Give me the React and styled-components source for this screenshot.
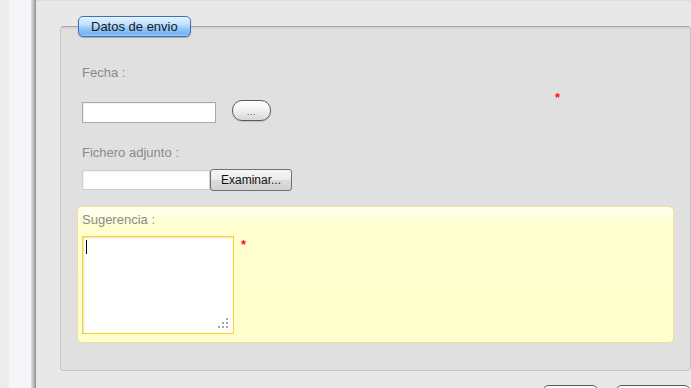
import React from 'react';
import styled, { createGlobalStyle } from 'styled-components';

const GlobalStyle = createGlobalStyle`
  html, body {
    margin: 0;
    padding: 0;
    height: 388px;
    overflow: hidden;
    font-family: "Liberation Sans", Arial, sans-serif;
  }
`;

const Page = styled.div`
  display: flex;
  height: 388px;
  overflow: hidden;
`;

const Gutter = styled.div`
  display: flex;
  width: 36px;
  flex: 0 0 36px;
`;

const Pattern = styled.div`
  width: 9px;
  background-color: #ececec;
  background-image: repeating-conic-gradient(#e6e6e6 0 25%, #f2f2f2 0 50%);
  background-size: 2px 2px;
`;

const Rail = styled.div`
  flex: 1;
  background: #f6f6f8;
`;

const RailEdge = styled.div`
  width: 5px;
  background: linear-gradient(to right, #e2e2e2, #b4b4b4 60%, #8e8e8e);
`;

const Main = styled.main`
  flex: 1;
  min-width: 0;
  background: #e8e8e8;
  border-top: 1px solid #dcdcdc;
  padding: 15px 0 0 24px;
`;

const Fieldset = styled.fieldset`
  margin: 0;
  min-width: 0;
  padding: 0 16px 27px 16px;
  border: 1px solid #c6c6c6;
  border-top-color: #a6a6a6;
  border-radius: 4px;
  background: linear-gradient(#cdcdcd, #dcdcdc 2px, #e0e0e0 4px);
`;

const Legend = styled.legend`
  margin-left: 1px;
  padding: 0 12px;
  height: 21px;
  box-sizing: border-box;
  line-height: 19px;
  font-size: 13px;
  color: #1a1a1a;
  border: 1px solid #3f70b4;
  border-radius: 5px;
  background: linear-gradient(#e4f2ff 0%, #bfe0ff 40%, #95c9fb 60%, #74b3f2 90%, #9fcffb 100%);
  box-shadow: 0 1px 1px rgba(0, 0, 0, 0.25);
`;

const FieldBlock = styled.div`
  display: grid;
  grid-template-columns: 473px 1fr;
  row-gap: ${(p) => p.$gap}px;
  padding-left: 5px;
  margin-top: ${(p) => p.$top}px;
`;

const Label = styled.div`
  font-size: 13px;
  line-height: 16px;
  color: #8a8a8a;
`;

const Row = styled.div`
  display: flex;
  align-items: ${(p) => p.$align || 'center'};
  grid-column: 1;
`;

const Required = styled.span`
  color: #ff1010;
  font-size: 13px;
  font-weight: bold;
  line-height: 13px;
  margin-top: ${(p) => p.$top || 0}px;
  margin-left: ${(p) => p.$left || 0}px;
  align-self: start;
`;

const SideRequired = styled(Required)`
  grid-column: 2;
  grid-row: 1 / span 2;
`;

const TextInput = styled.div`
  width: ${(p) => p.$w}px;
  height: ${(p) => p.$h}px;
  box-sizing: border-box;
  margin-top: ${(p) => p.$top || 0}px;
  background: #fff;
  border: 1px solid ${(p) => p.$border};
  box-shadow: inset 1px 1px 1px rgba(0, 0, 0, 0.06);
`;

const PillButton = styled.button`
  width: 39px;
  height: 21px;
  margin-left: 16px;
  padding: 2px 0 0;
  border: 1px solid #5c5c5c;
  border-radius: 10px;
  background: linear-gradient(#ffffff, #f3f3f3 45%, #d6d6d6);
  box-shadow: inset 0 0 1px #fff, 0 1px 1px rgba(0, 0, 0, 0.15);
  font-family: "Liberation Sans", Arial, sans-serif;
  font-size: 9px;
  color: #444;
  letter-spacing: 0.5px;
`;

const BrowseButton = styled.button`
  width: 82px;
  height: 22px;
  padding: 0;
  border: 1px solid #707070;
  border-radius: 3px;
  background: linear-gradient(#f6f6f6, #ebebeb 50%, #dcdcdc 51%, #d2d2d2);
  font-family: "Liberation Sans", Arial, sans-serif;
  font-size: 12px;
  color: #111;
`;

const Panel = styled.section`
  margin-top: 15px;
  height: 137px;
  box-sizing: border-box;
  padding: 5px 4px 0;
  border: 1px solid #efdf9f;
  border-radius: 5px;
  background: linear-gradient(#fffff2, #ffffd0 18px, #ffffcc);
`;

const PanelRow = styled.div`
  display: flex;
  align-items: flex-start;
  margin-top: 8px;
`;

const TextArea = styled.div`
  position: relative;
  width: 152px;
  height: 98px;
  box-sizing: border-box;
  padding: 3px 3px;
  background: #fff;
  border: 1px solid #ffd21e;
  box-shadow: inset 1px 1px 2px rgba(0, 0, 0, 0.12);
`;

const Caret = styled.span`
  display: block;
  width: 1px;
  height: 14px;
  background: #000;
`;

const Grip = styled.svg`
  position: absolute;
  right: 5px;
  bottom: 5px;
`;

const Footer = styled.div`
  display: flex;
  justify-content: flex-end;
  gap: 16px;
  margin-top: 14px;
`;

const FooterButton = styled.button`
  width: ${(p) => p.$w}px;
  height: 24px;
  padding: 0;
  border: 1px solid #555;
  border-radius: 7px;
  background: linear-gradient(#ffffff, #dcdcdc);
`;

function ResizeGrip() {
  const dots = [
    [8, 0],
    [4, 4], [8, 4],
    [0, 8], [4, 8], [8, 8],
  ];
  return (
    <Grip width="10" height="10" viewBox="0 0 10 10">
      {dots.map(([x, y]) => (
        <rect key={`${x}-${y}`} x={x} y={y} width="2" height="2" fill="#a8a8a8" />
      ))}
    </Grip>
  );
}

export default function App() {
  return (
    <>
      <GlobalStyle />
      <Page>
        <Gutter>
          <Pattern />
          <Rail />
          <RailEdge />
        </Gutter>
        <Main>
          <Fieldset>
            <Legend>Datos de envio</Legend>

            <FieldBlock $top={28} $gap={19}>
              <Label>Fecha :</Label>
              <SideRequired $top={26}>*</SideRequired>
              <Row $align="flex-start">
                <TextInput $w={134} $h={21} $top={2} $border="#a8a8a8" />
                <PillButton>...</PillButton>
              </Row>
            </FieldBlock>

            <FieldBlock $top={22} $gap={8}>
              <Label>Fichero adjunto :</Label>
              <Row>
                <TextInput $w={128} $h={20} $border="#cfcfcf" />
                <BrowseButton>Examinar...</BrowseButton>
              </Row>
            </FieldBlock>

            <Panel>
              <Label>Sugerencia :</Label>
              <PanelRow>
                <TextArea>
                  <Caret />
                  <ResizeGrip />
                </TextArea>
                <Required $top={2} $left={7}>*</Required>
              </PanelRow>
            </Panel>
          </Fieldset>
          <Footer>
            <FooterButton $w={57} aria-label="Enviar" />
            <FooterButton $w={76} aria-label="Cancelar" />
          </Footer>
        </Main>
      </Page>
    </>
  );
}
